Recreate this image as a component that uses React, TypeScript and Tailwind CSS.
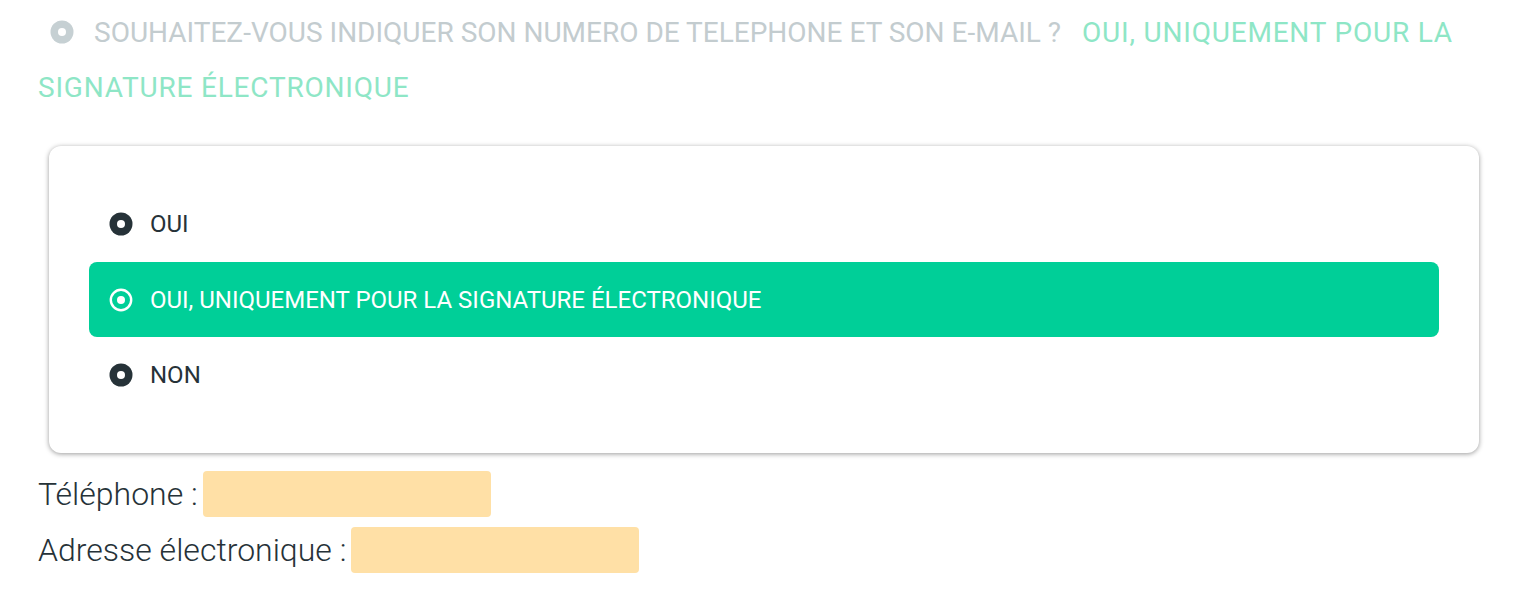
import React from "react";

const FilledRadio = ({ color }: { color: string }) => (
  <svg width="24" height="24" viewBox="0 0 24 24" className="shrink-0">
    <circle cx="12" cy="12" r="11.5" fill={color} />
    <circle cx="12" cy="12" r="4" fill="#ffffff" />
  </svg>
);

const RingRadio = () => (
  <svg width="24" height="24" viewBox="0 0 24 24" className="shrink-0">
    <circle cx="12" cy="12" r="10.2" fill="none" stroke="#ffffff" strokeWidth="2.4" />
    <circle cx="12" cy="12" r="4" fill="#ffffff" />
  </svg>
);

export default function App() {
  const font = { fontFamily: "Roboto, 'Noto Sans', sans-serif" };
  return (
    <div className="w-[1528px] h-[602px] bg-white overflow-hidden" style={font}>
      <div className="pl-[38px] pr-[20px] pt-[5px] text-[28px] leading-[55px] uppercase">
        <span className="inline-flex align-middle ml-[12px] mr-[20px] -mt-[5px]">
          <FilledRadio color="#c6d0d3" />
        </span>
        <span className="text-[#c3cccf]">Souhaitez-vous indiquer son numero de telephone et son e-mail ?</span>
        <span className="ml-[21px] tracking-[0.8px] text-[#8ee6c6]">Oui, uniquement pour la signature électronique</span>
      </div>

      <div className="mt-[31px] ml-[49px] w-[1430px] rounded-[12px] bg-white p-[40px] shadow-[0_1px_5px_rgba(0,0,0,0.4)]">
        <div className="flex h-[76px] items-center pl-[20px] gap-[17px] text-[24px] text-[#263238]">
          <FilledRadio color="#263238" />
          <span>OUI</span>
        </div>
        <div className="flex h-[75px] items-center pl-[20px] gap-[17px] rounded-[8px] bg-[#00cf98] text-[24px] text-white">
          <RingRadio />
          <span>OUI, UNIQUEMENT POUR LA SIGNATURE ÉLECTRONIQUE</span>
        </div>
        <div className="flex h-[76px] items-center pl-[20px] gap-[17px] text-[24px] text-[#263238]">
          <FilledRadio color="#263238" />
          <span>NON</span>
        </div>
      </div>

      <div className="pl-[38px] pt-[18px] flex flex-col gap-[10px] text-[32px] font-light text-[#263238]">
        <div className="flex items-center h-[46px]">
          <span>Téléphone :</span>
          <span className="ml-[5px] h-[46px] w-[288px] rounded-[4px] bg-[#ffe0a6]" />
        </div>
        <div className="flex items-center h-[46px]">
          <span>Adresse électronique :</span>
          <span className="ml-[5px] h-[46px] w-[288px] rounded-[4px] bg-[#ffe0a6]" />
        </div>
      </div>
    </div>
  );
}
